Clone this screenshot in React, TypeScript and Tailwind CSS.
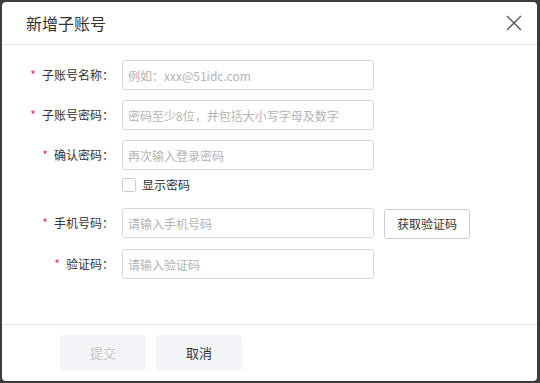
import { useState } from "react";

const fontStack = `"Noto Sans CJK SC", "Noto Sans", sans-serif`;

// 表单行：标签 + 输入框
const FieldRow = ({
  label,
  placeholder,
  type = "text",
  extra,
}: {
  label: string;
  placeholder: string;
  type?: string;
  extra?: React.ReactNode;
}) => (
  <div className="flex h-[30px] items-center">
    <label className="flex w-[120px] shrink-0 items-center justify-end pr-[8px] text-[12px] text-[#333]">
      <span className="mr-[6px] text-[#d23a6e]">*</span>
      {label}：
    </label>
    <input
      type={type}
      placeholder={placeholder}
      className="h-[30px] w-[252px] rounded-[3px] border border-[#d9d9d9] bg-white px-[5px] text-[12px] text-[#333] outline-none placeholder:text-[#b4b4b4]"
    />
    {extra}
  </div>
);

export default function App() {
  const [show, setShow] = useState(false);

  return (
    <div
      className="h-[383px] w-[540px] bg-[#3d3d3d] p-[2px] pr-[3px]"
      style={{ fontFamily: fontStack }}
    >
      <div className="flex h-full flex-col rounded-[4px] bg-white">
        {/* 标题栏 */}
        <div className="flex h-[43px] shrink-0 items-center justify-between border-b border-[#e8e8e8] pl-[24px] pr-[11px]">
          <span className="text-[16px] text-[#333]">新增子账号</span>
          <button className="flex h-[24px] w-[24px] items-center justify-center">
            <svg width="16" height="16" viewBox="0 0 16 16">
              <path
                d="M1 1L15 15M15 1L1 15"
                stroke="#555"
                strokeWidth="1.3"
                fill="none"
              />
            </svg>
          </button>
        </div>

        {/* 表单内容 */}
        <div className="flex flex-1 flex-col pt-[15px]">
          <div className="flex flex-col gap-[10px]">
            <FieldRow label="子账号名称" placeholder="例如：xxx@51idc.com" />
            <FieldRow
              label="子账号密码"
              type={show ? "text" : "password"}
              placeholder="密码至少8位，并包括大小写字母及数字"
            />
            <FieldRow
              label="确认密码"
              type={show ? "text" : "password"}
              placeholder="再次输入登录密码"
            />
          </div>

          <div className="ml-[120px] mt-[8px] flex h-[14px] items-center">
            <button
              onClick={() => setShow(!show)}
              className="h-[14px] w-[14px] rounded-[2px] border border-[#cfcfcf] bg-white"
            />
            <span className="ml-[6px] text-[12px] text-[#333]">显示密码</span>
          </div>

          <div className="mt-[16px] flex flex-col gap-[11px]">
            <FieldRow
              label="手机号码"
              placeholder="请输入手机号码"
              extra={
                <button className="ml-[10px] mt-[1px] h-[30px] w-[86px] rounded-[3px] border border-[#ccc] bg-white text-[12px] text-[#333]">
                  获取验证码
                </button>
              }
            />
            <FieldRow label="验证码" placeholder="请输入验证码" />
          </div>
        </div>

        {/* 底部按钮 */}
        <div className="flex h-[57px] shrink-0 items-start gap-[10px] border-t border-[#f1e4e8] pl-[58px] pt-[10px]">
          <button
            disabled
            className="h-[36px] w-[86px] rounded-[4px] bg-[#f3f5f8] text-[13px] text-[#c8c8c8]"
          >
            提交
          </button>
          <button className="h-[36px] w-[86px] rounded-[4px] bg-[#f3f5f8] text-[13px] text-[#333]">
            取消
          </button>
        </div>
      </div>
    </div>
  );
}
